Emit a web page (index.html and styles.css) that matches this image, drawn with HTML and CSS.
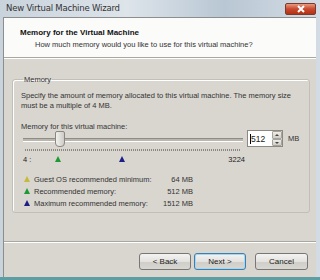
FILE: index.html
```html
<html lang="en">

<head>
    <meta charset="UTF-8">
    <title>New Virtual Machine Wizard</title>
    <link rel="stylesheet" href="styles.css">
</head>

<body>
    <div class="window">
        <div class="titlebar">
            <span class="title">New Virtual Machine Wizard</span>
            <span class="close">
                <svg width="10" height="8" viewBox="0 0 10 8">
                    <path d="M2 1 L8 7 M8 1 L2 7" stroke="#fff" stroke-width="2" />
                </svg>
            </span>
        </div>
        <div class="frame">
            <div class="header">
                <div class="h-title">Memory for the Virtual Machine</div>
                <div class="h-sub">How much memory would you like to use for this virtual machine?</div>
            </div>
            <div class="main">
                <fieldset class="group">
                    <legend>Memory</legend>
                    <p class="desc">Specify the amount of memory allocated to this virtual machine. The memory size must be a multiple of 4 MB.</p>
                    <div class="label">Memory for this virtual machine:</div>
                    <div class="slider-row">
                        <div class="slider">
                            <div class="track"></div>
                            <div class="thumb"></div>
                            <div class="ticks"></div>
                            <div class="marks">
                                <span class="min">4 :</span>
                                <span class="tri green" style="left: 34px"></span>
                                <span class="tri blue" style="left: 98px"></span>
                                <span class="max">3224</span>
                            </div>
                        </div>
                        <div class="spin">
                            <span class="spin-val">512</span>
                            <span class="spin-btns">
                                <span class="up"></span>
                                <span class="down"></span>
                            </span>
                        </div>
                        <span class="unit">MB</span>
                    </div>
                    <ul class="legend-list">
                        <li><span class="tri yellow"></span><span class="name">Guest OS recommended minimum:</span><span class="val">64 MB</span></li>
                        <li><span class="tri green"></span><span class="name">Recommended memory:</span><span class="val">512 MB</span></li>
                        <li><span class="tri blue"></span><span class="name">Maximum recommended memory:</span><span class="val">1512 MB</span></li>
                    </ul>
                </fieldset>
            </div>
            <div class="buttons">
                <button class="btn">&lt; Back</button>
                <button class="btn default">Next &gt;</button>
                <button class="btn cancel">Cancel</button>
            </div>
        </div>
    </div>
</body>

</html>
```

FILE: styles.css
```css
body {
    margin: 0px;
    padding: 0px;
    background: #fff;
    font-family: "Liberation Sans", Arial, sans-serif;
    font-size: 7.5px;
    color: #222;
}

.window {
    width: 320px;
    height: 280px;
    display: flex;
    flex-direction: column;
    background: linear-gradient(90deg, #c9d3dc, #dde4ea 40%, #b9c7d4 70%, #d3dce4);
    box-sizing: border-box;
    border-bottom: 3px solid #5d9ea3;
}

.titlebar {
    height: 16px;
    display: flex;
    align-items: center;
    justify-content: space-between;
    padding: 0px 4px 0px 6px;
    flex: none;
}

.title {
    font-family: "DejaVu Sans", sans-serif;
    font-size: 8.5px;
    color: #333;
    letter-spacing: -0.2px;
}

.close {
    width: 31px;
    height: 12px;
    margin-top: 2px;
    border: 1px solid #7c3a2c;
    border-radius: 2px;
    background: linear-gradient(#e99a80, #c8492e 50%, #b43214);
    display: flex;
    align-items: center;
    justify-content: center;
    box-sizing: border-box;
}

.frame {
    flex: 1;
    margin: 1px 4px 0px 3px;
    border-left: 1px solid #8d8d8d;
    border-top: 1px solid #8d8d8d;
    display: flex;
    flex-direction: column;
    background: #d9d6d0;
}

.header {
    height: 40px;
    background: #fbfbfa;
    border-bottom: 1px solid #a9a7a2;
    box-shadow: 0px 1px 0px #fff;
    padding: 10px 0px 0px 16px;
    box-sizing: border-box;
    flex: none;
}

.h-title {
    font-weight: bold;
    font-size: 8px;
    color: #111;
}

.h-sub {
    margin: 3px 0px 0px 15px;
    color: #333;
}

.main {
    padding: 17px 6px 0px 8px;
    height: 184px;
    box-sizing: border-box;
    border-bottom: 1px solid #a9a7a2;
    box-shadow: 0px 1px 0px #fff;
    flex: none;
}

.group {
    margin: 0px;
    padding: 7px 7px 0px 8px;
    border: 1px solid #c2bfb8;
    border-radius: 3px;
    height: 138px;
    box-sizing: border-box;
    box-shadow: inset 1px 1px 0px #fff;
}

.group legend {
    padding: 0px 1px;
    margin-left: 2px;
    color: #333;
}

.desc {
    margin: 0px;
    line-height: 10px;
    color: #333;
}

.label {
    margin-top: 11px;
    color: #333;
}

.slider-row {
    display: flex;
    align-items: flex-start;
    margin-top: -1px;
}

.slider {
    position: relative;
    width: 224px;
    height: 30px;
}

.track {
    position: absolute;
    left: 2px;
    right: 2px;
    top: 8px;
    height: 2px;
    border-top: 1px solid #8f8c86;
    border-bottom: 1px solid #fff;
    background: #b9b6b0;
}

.thumb {
    position: absolute;
    left: 34px;
    top: 1px;
    width: 8px;
    height: 14px;
    background: linear-gradient(90deg, #f2f1ee, #cfccc6);
    border: 1px solid #8a8781;
    border-radius: 2px 2px 4px 4px;
}

.ticks {
    position: absolute;
    left: 4px;
    right: 4px;
    top: 19px;
    height: 2px;
    background: repeating-linear-gradient(90deg, #8b8882 0px, #8b8882 1px, transparent 1px, transparent 2px);
}

.marks {
    position: absolute;
    left: 0px;
    right: 0px;
    top: 24px;
    height: 10px;
}

.min {
    position: absolute;
    left: 2px;
    top: 1px;
}

.max {
    position: absolute;
    right: 0px;
    top: 1px;
}

.marks .tri {
    position: absolute;
    top: 2px;
}

.tri {
    display: inline-block;
    width: 0px;
    height: 0px;
    border-left: 3.5px solid transparent;
    border-right: 3.5px solid transparent;
    border-bottom: 6px solid #000;
}

.tri.green {
    border-bottom-color: #1f9a32;
}

.tri.blue {
    border-bottom-color: #1d1f86;
}

.tri.yellow {
    border-bottom-color: #c7b93a;
}

.spin {
    margin-left: 2px;
    width: 36px;
    height: 17px;
    background: #fff;
    border: 1px solid #8c8983;
    box-sizing: border-box;
    display: flex;
    align-items: center;
    justify-content: space-between;
}

.spin-val {
    font-size: 8.5px;
    border-left: 1px solid #000;
    margin-left: 2px;
    line-height: 10px;
}

.spin-btns {
    width: 10px;
    height: 15px;
    display: flex;
    flex-direction: column;
}

.spin-btns span {
    flex: 1;
    background: linear-gradient(#eeede9, #cfccc5);
    border: 1px solid #a6a39d;
    border-radius: 1px;
    position: relative;
}

.spin-btns .up::after,
.spin-btns .down::after {
    content: "";
    position: absolute;
    left: 2px;
    top: 2px;
    border-left: 2px solid transparent;
    border-right: 2px solid transparent;
}

.spin-btns .up::after {
    border-bottom: 2px solid #444;
}

.spin-btns .down::after {
    border-top: 2px solid #444;
}

.unit {
    margin: 4px 0px 0px 5px;
    color: #333;
}

.legend-list {
    list-style: none;
    margin: 13px 0px 0px 3px;
    padding: 0px;
}

.legend-list li {
    display: flex;
    align-items: center;
    height: 12px;
    color: #333;
    white-space: nowrap;
}

.legend-list .tri {
    margin-right: 4px;
}

.legend-list .name {
    width: 117px;
}

.legend-list .val {
    width: 42px;
    text-align: right;
}

.buttons {
    flex: 1;
    display: flex;
    align-items: flex-start;
    justify-content: flex-end;
    padding: 11px 8px 0px 0px;
}

.btn {
    width: 52px;
    height: 17px;
    margin-left: 3px;
    font-family: "Liberation Sans", Arial, sans-serif;
    font-size: 8px;
    color: #222;
    border: 1px solid #777;
    border-radius: 3px;
    background: linear-gradient(#f3f3f2, #e3e2df 50%, #cfcdc8 51%, #d9d7d2);
    padding: 0px;
}

.btn.default {
    border-color: #3c7fb1;
    box-shadow: inset 0px 0px 0px 1px #a7d6ee;
}

.btn.cancel {
    margin-left: 9px;
    width: 53px;
}
```
